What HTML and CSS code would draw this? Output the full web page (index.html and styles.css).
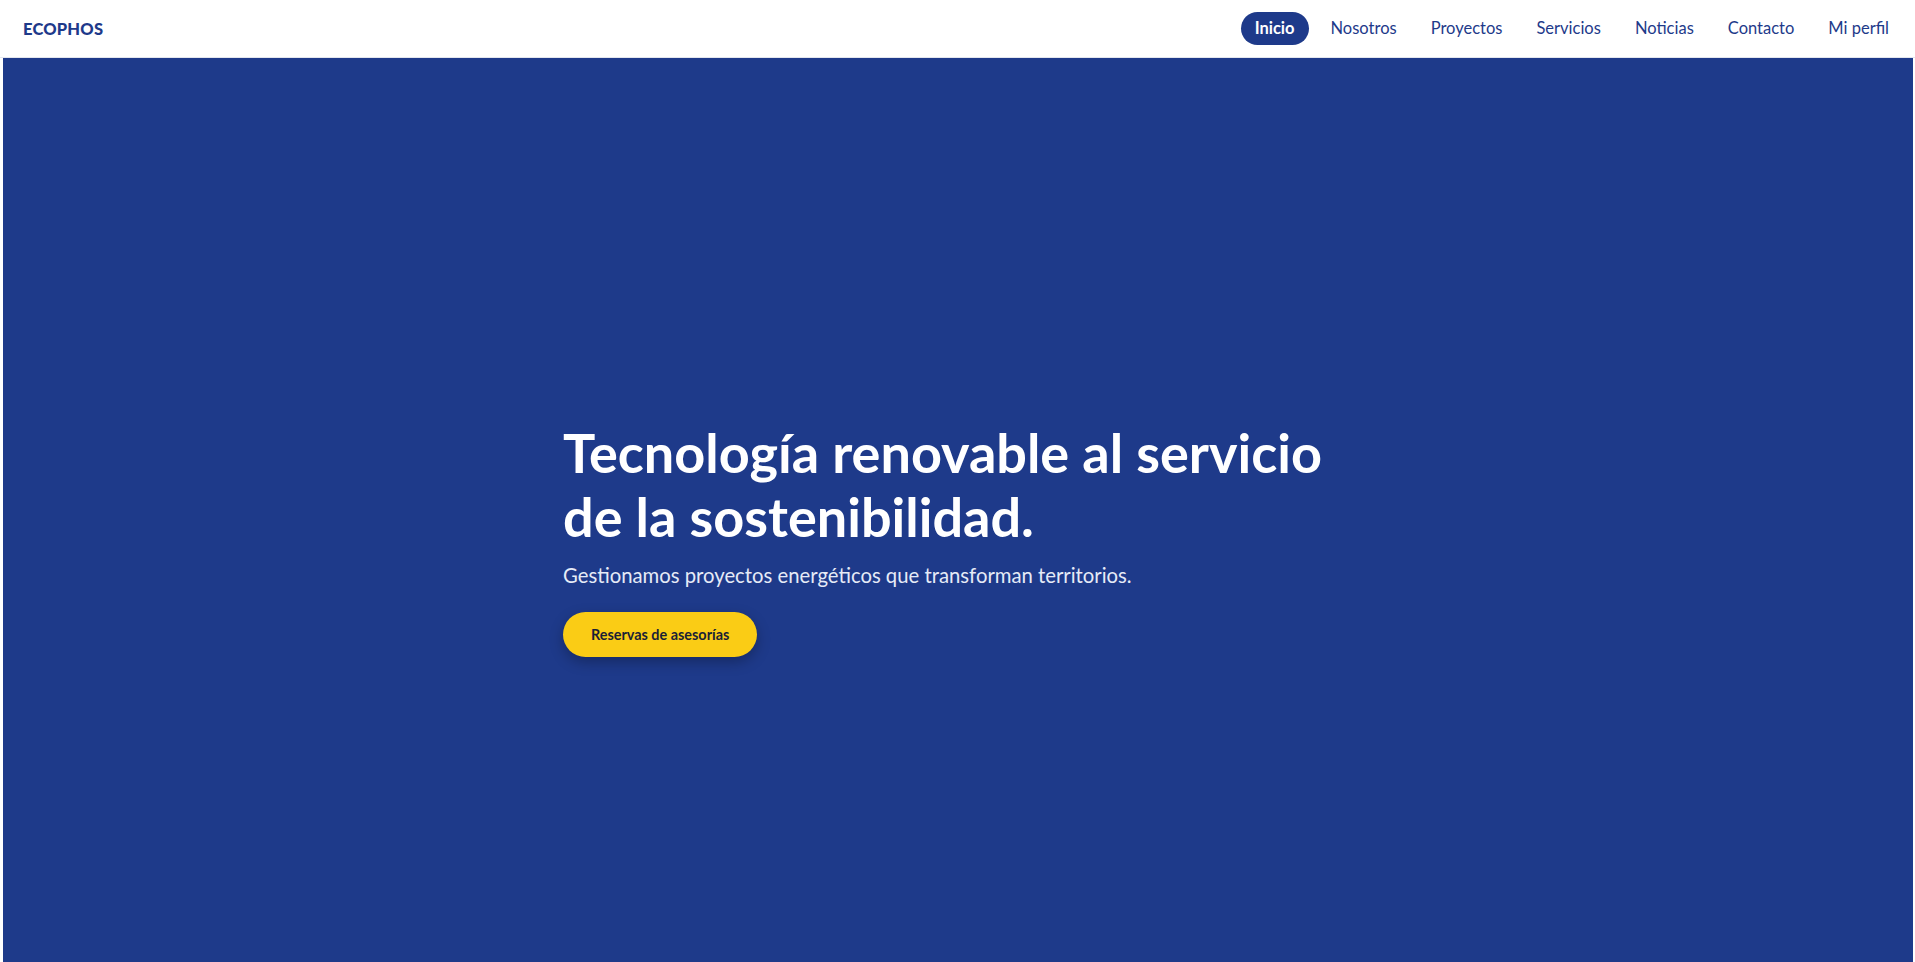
FILE: index.html
```html
<!DOCTYPE html>
<html lang="es">
<head>
<meta charset="utf-8">
<title>ECOPHOS</title>
<link rel="stylesheet" href="styles.css">
</head>
<body>
<header class="site-header">
  <a class="logo" href="#">ECOPHOS</a>
  <nav class="main-nav">
    <a class="nav-link active" href="#">Inicio</a>
    <a class="nav-link" href="#">Nosotros</a>
    <a class="nav-link" href="#">Proyectos</a>
    <a class="nav-link" href="#">Servicios</a>
    <a class="nav-link" href="#">Noticias</a>
    <a class="nav-link" href="#">Contacto</a>
    <a class="nav-link" href="#">Mi perfil</a>
  </nav>
</header>
<main class="hero">
  <div class="hero-content">
    <h1 class="hero-title">Tecnología renovable al servicio de la sostenibilidad.</h1>
    <p class="hero-sub">Gestionamos proyectos energéticos que transforman territorios.</p>
    <a class="hero-btn" href="#">Reservas de asesorías</a>
  </div>
</main>
</body>
</html>
```
FILE: styles.css
```css
* { box-sizing: border-box; }
html, body { margin: 0; padding: 0; }
body {
  font-family: Lato, "Noto Sans", sans-serif;
  background: #ffffff;
  overflow: hidden;
}
a { text-decoration: none; }

.site-header {
  height: 58px;
  display: flex;
  align-items: center;
  justify-content: space-between;
  padding: 0 14px 0 23px;
  background: #ffffff;
  border-bottom: 1px solid #e3e6ee;
}
.logo {
  font-size: 16.5px;
  font-weight: 900;
  color: #1e3a8a;
  letter-spacing: 0.2px;
}
.main-nav {
  display: flex;
  align-items: center;
  gap: 10px;
}
.nav-link {
  font-size: 16.5px;
  line-height: 21px;
  padding: 6px 12px;
  border-radius: 999px;
  color: #1e3a8a;
}
.nav-link.active {
  background: #1e3a8a;
  color: #ffffff;
  font-weight: 700;
  padding: 6px 14px;
}

.hero {
  min-height: 962px;
  margin: 0 2px 0 3px;
  background: #1e3a8a;
  display: flex;
  align-items: center;
  justify-content: center;
}
.hero-content {
  width: 790px;
}
.hero-title {
  margin: 0;
  font-size: 54px;
  line-height: 1.18;
  font-weight: 700;
  color: #ffffff;
}
.hero-sub {
  margin: 13px 0 23px;
  font-size: 20.3px;
  line-height: 28px;
  color: #e6ebf7;
}
.hero-btn {
  display: inline-block;
  height: 45px;
  line-height: 45px;
  padding: 0 28px;
  border-radius: 999px;
  background: #facc15;
  color: #1a1f36;
  font-size: 14.4px;
  font-weight: 700;
  box-shadow: 0 5px 14px rgba(0, 0, 0, 0.28);
}
```
